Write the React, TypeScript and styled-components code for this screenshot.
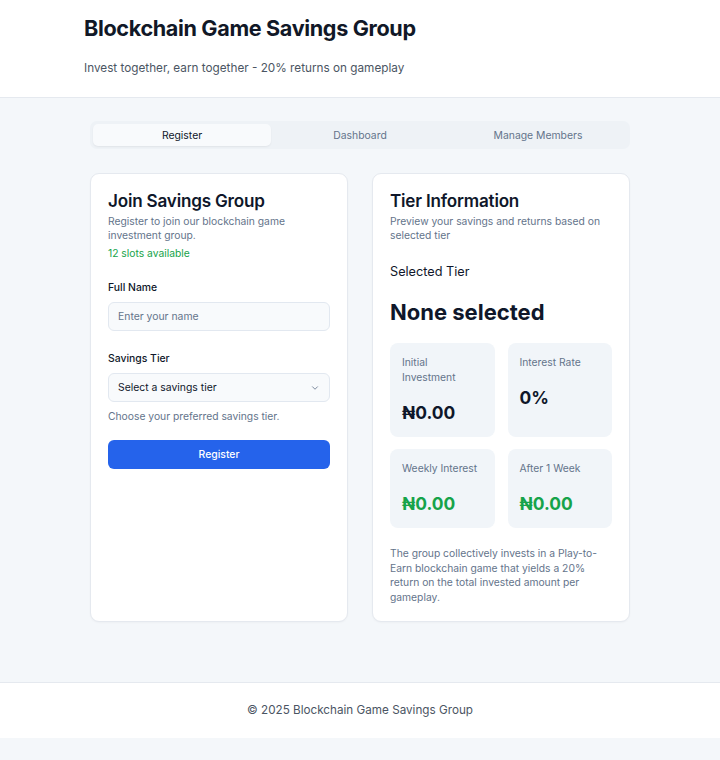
import React from "react";
import styled, { createGlobalStyle } from "styled-components";

const Global = createGlobalStyle`
  * { box-sizing: border-box; }
  body { margin: 0; background: #f4f7fa; font-family: Inter, "Noto Sans", sans-serif; color: #0f172a; }
`;

const Header = styled.header`
  background: #fff;
  border-bottom: 1px solid #e5e9ef;
  padding: 15px 84px 20px;
  height: 98px;
`;
const Title = styled.h1`
  margin: 0;
  font-size: 21.6px;
  font-weight: 700;
  letter-spacing: -0.35px;
  color: #111827;
  line-height: 26px;
`;
const Subtitle = styled.p`
  margin: 19px 0 0;
  font-size: 11.75px;
  color: #4b5563;
  line-height: 16px;
`;

const Main = styled.main`
  width: 540px;
  margin: 0 auto;
  padding: 23px 0 60px;
`;
const Tabs = styled.div`
  display: grid;
  grid-template-columns: repeat(3, 1fr);
  background: #eef2f6;
  border-radius: 7px;
  padding: 3px;
  height: 28px;
`;
const Tab = styled.div<{ $active?: boolean }>`
  display: flex;
  align-items: center;
  justify-content: center;
  font-size: 10.4px;
  padding-top: 1px;
  border-radius: 5px;
  color: ${p => (p.$active ? "#0f172a" : "#64748b")};
  background: ${p => (p.$active ? "#f8fafc" : "transparent")};
  box-shadow: ${p => (p.$active ? "0 1px 2px rgba(0,0,0,0.06)" : "none")};
`;
const Grid = styled.div`
  display: grid;
  grid-template-columns: 258px 258px;
  justify-content: space-between;
  margin-top: 24px;
`;
const Card = styled.section`
  background: #fff;
  border: 1px solid #e5e9ef;
  border-radius: 9px;
  padding: 16px 17px 17px;
  height: 449px;
  box-shadow: 0 1px 2px rgba(0,0,0,0.03);
`;
const CardTitle = styled.h2`
  margin: 0;
  font-size: 17.1px;
  font-weight: 600;
  line-height: 22px;
  letter-spacing: -0.2px;
`;
const CardDesc = styled.p`
  margin: 2px 0 0;
  font-size: 10.3px;
  line-height: 14px;
  color: #64748b;
`;
const Slots = styled.p`
  margin: 4px 0 0;
  font-size: 10.3px;
  line-height: 14px;
  color: #16a34a;
`;
const Field = styled.div<{ $mt: number }>`
  margin-top: ${p => p.$mt}px;
  display: flex;
  flex-direction: column;
`;
const Label = styled.label`
  font-size: 10.4px;
  line-height: 14px;
  font-weight: 500;
  color: #0f172a;
  margin-bottom: 7px;
`;
const Input = styled.div`
  height: 29px;
  border: 1px solid #e2e8f0;
  border-radius: 6px;
  background: #f8fafc;
  padding: 0 9px;
  display: flex;
  align-items: center;
  justify-content: space-between;
  font-size: 10.4px;
`;
const Placeholder = styled.span<{ $dark?: boolean }>`
  color: ${p => (p.$dark ? "#0f172a" : "#64748b")};
`;
const Helper = styled.p`
  margin: 7px 0 0;
  font-size: 10.3px;
  line-height: 14px;
  color: #64748b;
`;
const Button = styled.button`
  margin-top: 17px;
  width: 100%;
  height: 29px;
  border: none;
  border-radius: 6px;
  background: #2563eb;
  color: #fff;
  font-family: inherit;
  font-size: 10.4px;
  font-weight: 500;
`;

const SelTierLabel = styled.p`
  margin: 21px 0 0;
  font-size: 12.7px;
  line-height: 18px;
  color: #0f172a;
`;
const SelTierValue = styled.p`
  margin: 17px 0 0;
  font-size: 22px;
  font-weight: 700;
  line-height: 28px;
  color: #0f172a;
`;
const Stats = styled.div`
  margin-top: 17px;
  display: grid;
  grid-template-columns: 1fr 1fr;
  align-items: stretch;
  gap: 12px 13px;
`;
const Stat = styled.div`
  background: #f1f5f9;
  border-radius: 8px;
  padding: 12px 12px 13px;
  display: flex;
  flex-direction: column;
`;
const StatLabel = styled.span`
  font-size: 10.3px;
  line-height: 15px;
  color: #64748b;
`;
const StatValue = styled.span<{ $green?: boolean }>`
  margin-top: 17px;
  font-size: 17.4px;
  font-weight: 700;
  line-height: 22px;
  color: ${p => (p.$green ? "#16a34a" : "#0f172a")};
`;
const Note = styled.p`
  margin: 18px 0 0;
  font-size: 10.3px;
  line-height: 14.6px;
  color: #64748b;
`;

const Footer = styled.footer`
  background: #fff;
  border-top: 1px solid #e5e9ef;
  height: 56px;
  display: flex;
  align-items: center;
  justify-content: center;
  padding-bottom: 2px;
  font-size: 11.7px;
  color: #4b5563;
`;

const Chevron = () => (
  <svg width="10" height="10" viewBox="0 0 24 24" fill="none" stroke="#64748b" strokeWidth="2" strokeLinecap="round" strokeLinejoin="round">
    <path d="m6 9 6 6 6-6" />
  </svg>
);

export default function App() {
  return (
    <>
      <Global />
      <Header>
        <Title>Blockchain Game Savings Group</Title>
        <Subtitle>Invest together, earn together - 20% returns on gameplay</Subtitle>
      </Header>
      <Main>
        <Tabs>
          <Tab $active>Register</Tab>
          <Tab>Dashboard</Tab>
          <Tab>Manage Members</Tab>
        </Tabs>
        <Grid>
          <Card>
            <CardTitle>Join Savings Group</CardTitle>
            <CardDesc>Register to join our blockchain game investment group.</CardDesc>
            <Slots>12 slots available</Slots>
            <Field $mt={21}>
              <Label>Full Name</Label>
              <Input>
                <Placeholder>Enter your name</Placeholder>
              </Input>
            </Field>
            <Field $mt={21}>
              <Label>Savings Tier</Label>
              <Input>
                <Placeholder $dark>Select a savings tier</Placeholder>
                <Chevron />
              </Input>
            </Field>
            <Helper>Choose your preferred savings tier.</Helper>
            <Button>Register</Button>
          </Card>
          <Card>
            <CardTitle>Tier Information</CardTitle>
            <CardDesc>Preview your savings and returns based on selected tier</CardDesc>
            <SelTierLabel>Selected Tier</SelTierLabel>
            <SelTierValue>None selected</SelTierValue>
            <Stats>
              <Stat>
                <StatLabel>Initial<br />Investment</StatLabel>
                <StatValue>₦0.00</StatValue>
              </Stat>
              <Stat>
                <StatLabel>Interest Rate</StatLabel>
                <StatValue>0%</StatValue>
              </Stat>
              <Stat>
                <StatLabel>Weekly Interest</StatLabel>
                <StatValue $green>₦0.00</StatValue>
              </Stat>
              <Stat>
                <StatLabel>After 1 Week</StatLabel>
                <StatValue $green>₦0.00</StatValue>
              </Stat>
            </Stats>
            <Note>The group collectively invests in a Play-to-Earn blockchain game that yields a 20% return on the total invested amount per gameplay.</Note>
          </Card>
        </Grid>
      </Main>
      <Footer>© 2025 Blockchain Game Savings Group</Footer>
    </>
  );
}
